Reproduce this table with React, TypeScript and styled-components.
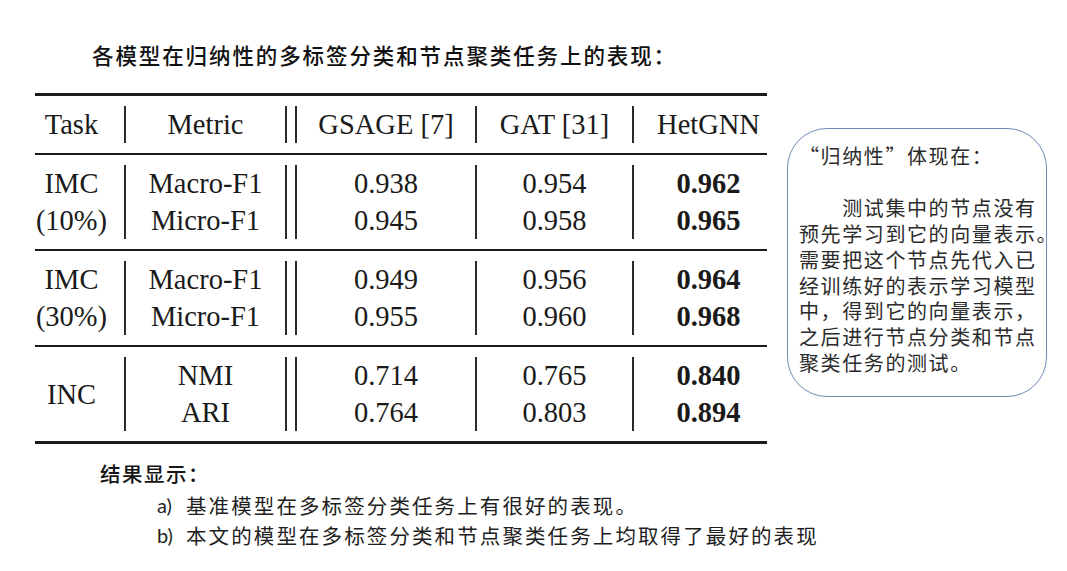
import React from "react";
import styled, { createGlobalStyle } from "styled-components";

const GlobalStyle = createGlobalStyle`
  html, body { margin: 0; padding: 0; background: #ffffff; }
  * { box-sizing: border-box; }
`;

const CJK = `"Noto Sans CJK SC", "Noto Sans", sans-serif`;
const SERIF = `"Liberation Serif", "Times New Roman", serif`;

const Page = styled.div`
  width: 1067px;
  height: 571px;
  overflow: hidden;
  padding-top: 40px;
  display: flex;
  flex-direction: column;
  font-family: ${CJK};
  color: #111;
`;

const Title = styled.h1`
  margin: 0;
  padding-left: 92px;
  font-size: 21.5px;
  line-height: 30px;
  letter-spacing: 1.9px;
  font-weight: 500;
  color: #111;
`;

const Middle = styled.div`
  display: flex;
  align-items: flex-start;
  margin-top: 23px;
  padding-left: 35px;
`;

const Table = styled.div`
  width: 732px;
  display: flex;
  flex-direction: column;
  font-family: ${SERIF};
  font-size: 28.5px;
  color: #1a1a1a;
`;

const Rule = styled.div<{ $h: number }>`
  height: ${(p) => p.$h}px;
  background: #1c1c1c;
`;

const Section = styled.div`
  display: grid;
  grid-template-columns: 89px 2px 159px 12px 178px 2px 155px 2px 133px;
  padding: 10px 0;
`;

const Cell = styled.div<{ $shift?: number; $bold?: boolean }>`
  display: flex;
  flex-direction: column;
  justify-content: center;
  align-items: center;
  padding-left: ${(p) => Math.max(p.$shift ?? 0, 0) * 2}px;
  padding-right: ${(p) => Math.max(-(p.$shift ?? 0), 0) * 2}px;
  font-weight: ${(p) => (p.$bold ? 700 : 400)};
`;

const Line = styled.span`
  display: block;
  line-height: 37px;
  height: 37px;
  white-space: nowrap;
`;

const VRule = styled.div`
  width: 2px;
  background: #2a2a2a;
`;

const DoubleRule = styled.div`
  width: 12px;
  border-left: 2px solid #2a2a2a;
  border-right: 2px solid #2a2a2a;
`;

const NoteBox = styled.div`
  margin-left: 20px;
  margin-top: 35px;
  width: 260px;
  height: 269px;
  border: 1.5px solid #6f8cbc;
  border-radius: 40px;
  padding: 14px 0 0 11px;
`;

const NoteText = styled.p`
  margin: 0;
  font-family: ${CJK};
  font-size: 20px;
  letter-spacing: 1.6px;
  line-height: 25.9px;
  white-space: pre;
  color: #2b2b2b;
`;

const Results = styled.div`
  margin-top: 14px;
  display: flex;
  flex-direction: column;
`;

const ResultsHeading = styled.div`
  padding-left: 100px;
  font-size: 20.5px;
  line-height: 30px;
  letter-spacing: 1.5px;
  font-weight: 500;
  color: #151515;
`;

const ResultList = styled.ol`
  list-style: none;
  margin: 2px 0 0 0;
  padding: 0 0 0 157px;
`;

const ResultItem = styled.li`
  display: flex;
  align-items: center;
  height: 30px;
  line-height: 30px;
  font-size: 20.5px;
  letter-spacing: 2.1px;
  color: #1e1e1e;
  white-space: nowrap;
`;

const Marker = styled.span`
  width: 29px;
  font-family: Lato, "Open Sans", sans-serif;
  font-size: 20px;
  letter-spacing: 0;
`;

type Row = {
  task: string[];
  metrics: string[];
  gsage: string[];
  gat: string[];
  het: string[];
};

const rows: Row[] = [
  {
    task: ["IMC", "(10%)"],
    metrics: ["Macro-F1", "Micro-F1"],
    gsage: ["0.938", "0.945"],
    gat: ["0.954", "0.958"],
    het: ["0.962", "0.965"],
  },
  {
    task: ["IMC", "(30%)"],
    metrics: ["Macro-F1", "Micro-F1"],
    gsage: ["0.949", "0.955"],
    gat: ["0.956", "0.960"],
    het: ["0.964", "0.968"],
  },
  {
    task: ["INC"],
    metrics: ["NMI", "ARI"],
    gsage: ["0.714", "0.764"],
    gat: ["0.765", "0.803"],
    het: ["0.840", "0.894"],
  },
];

const Lines = ({ items }: { items: string[] }) => (
  <>
    {items.map((t) => (
      <Line key={t}>{t}</Line>
    ))}
  </>
);

const note = [
  "“归纳性”体现在：",
  "",
  "　　测试集中的节点没有",
  "预先学习到它的向量表示。",
  "需要把这个节点先代入已",
  "经训练好的表示学习模型",
  "中，得到它的向量表示，",
  "之后进行节点分类和节点",
  "聚类任务的测试。",
].join("\n");

export default function App() {
  return (
    <>
      <GlobalStyle />
      <Page>
        <Title>各模型在归纳性的多标签分类和节点聚类任务上的表现：</Title>
        <Middle>
          <Table>
            <Rule $h={3} />
            <Section>
              <Cell $shift={-8}>
                <Line>Task</Line>
              </Cell>
              <VRule />
              <Cell>
                <Line>Metric</Line>
              </Cell>
              <DoubleRule />
              <Cell>
                <Line>GSAGE [7]</Line>
              </Cell>
              <VRule />
              <Cell>
                <Line>GAT [31]</Line>
              </Cell>
              <VRule />
              <Cell $shift={8}>
                <Line>HetGNN</Line>
              </Cell>
            </Section>
            {rows.map((r, i) => (
              <React.Fragment key={i}>
                <Rule $h={2} />
                <Section>
                  <Cell $shift={-8}>
                    <Lines items={r.task} />
                  </Cell>
                  <VRule />
                  <Cell>
                    <Lines items={r.metrics} />
                  </Cell>
                  <DoubleRule />
                  <Cell>
                    <Lines items={r.gsage} />
                  </Cell>
                  <VRule />
                  <Cell>
                    <Lines items={r.gat} />
                  </Cell>
                  <VRule />
                  <Cell $shift={8} $bold>
                    <Lines items={r.het} />
                  </Cell>
                </Section>
              </React.Fragment>
            ))}
            <Rule $h={3} />
          </Table>
          <NoteBox>
            <NoteText>{note}</NoteText>
          </NoteBox>
        </Middle>
        <Results>
          <ResultsHeading>结果显示：</ResultsHeading>
          <ResultList>
            <ResultItem>
              <Marker>a)</Marker>基准模型在多标签分类任务上有很好的表现。
            </ResultItem>
            <ResultItem>
              <Marker>b)</Marker>本文的模型在多标签分类和节点聚类任务上均取得了最好的表现
            </ResultItem>
          </ResultList>
        </Results>
      </Page>
    </>
  );
}
